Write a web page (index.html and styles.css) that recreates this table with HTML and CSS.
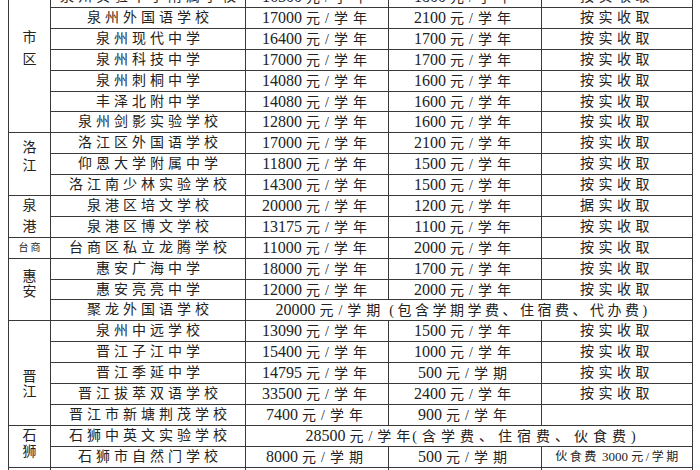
FILE: index.html
```html
<!DOCTYPE html>
<html lang="zh-CN">
<head>
<meta charset="utf-8">
<title>泉州民办学校收费标准</title>
<link rel="stylesheet" href="styles.css">
</head>
<body>
<div class="sheet">
  <div class="c rg r-shiqu">市<br>区</div>
  <div class="c name">泉州第五中学</div><div class="c fee">16000 <span class="u">元/学年</span></div><div class="c fee">1600 <span class="u">元/学年</span></div><div class="c memo">按实收取</div>
  <div class="c name">泉州实验中学附属学校</div><div class="c fee">16500 <span class="u">元/学年</span></div><div class="c fee">1800 <span class="u">元/学年</span></div><div class="c memo">按实收取</div>
  <div class="c name">泉州外国语学校</div><div class="c fee">17000 <span class="u">元/学年</span></div><div class="c fee">2100 <span class="u">元/学年</span></div><div class="c memo">按实收取</div>
  <div class="c name">泉州现代中学</div><div class="c fee">16400 <span class="u">元/学年</span></div><div class="c fee">1700 <span class="u">元/学年</span></div><div class="c memo">按实收取</div>
  <div class="c name">泉州科技中学</div><div class="c fee">17000 <span class="u">元/学年</span></div><div class="c fee">1700 <span class="u">元/学年</span></div><div class="c memo">按实收取</div>
  <div class="c name">泉州刺桐中学</div><div class="c fee">14080 <span class="u">元/学年</span></div><div class="c fee">1600 <span class="u">元/学年</span></div><div class="c memo">按实收取</div>
  <div class="c name">丰泽北附中学</div><div class="c fee">14080 <span class="u">元/学年</span></div><div class="c fee">1600 <span class="u">元/学年</span></div><div class="c memo">按实收取</div>
  <div class="c name">泉州剑影实验学校</div><div class="c fee">12800 <span class="u">元/学年</span></div><div class="c fee">1600 <span class="u">元/学年</span></div><div class="c memo">按实收取</div>

  <div class="c rg r-luojiang">洛<br>江</div>
  <div class="c name">洛江区外国语学校</div><div class="c fee">17000 <span class="u">元/学年</span></div><div class="c fee">2100 <span class="u">元/学年</span></div><div class="c memo">按实收取</div>
  <div class="c name">仰恩大学附属中学</div><div class="c fee">11800 <span class="u">元/学年</span></div><div class="c fee">1500 <span class="u">元/学年</span></div><div class="c memo">按实收取</div>
  <div class="c name">洛江南少林实验学校</div><div class="c fee">14300 <span class="u">元/学年</span></div><div class="c fee">1500 <span class="u">元/学年</span></div><div class="c memo">按实收取</div>

  <div class="c rg r-quangang">泉<br>港</div>
  <div class="c name">泉港区培文学校</div><div class="c fee">20000 <span class="u">元/学年</span></div><div class="c fee">1200 <span class="u">元/学年</span></div><div class="c memo">据实收取</div>
  <div class="c name">泉港区博文学校</div><div class="c fee">13175 <span class="u">元/学年</span></div><div class="c fee">1100 <span class="u">元/学年</span></div><div class="c memo">按实收取</div>

  <div class="c rg r-taishang">台商</div>
  <div class="c name">台商区私立龙腾学校</div><div class="c fee">11000 <span class="u">元/学年</span></div><div class="c fee">2000 <span class="u">元/学年</span></div><div class="c memo">按实收取</div>

  <div class="c rg r-huian">惠<br>安</div>
  <div class="c name">惠安广海中学</div><div class="c fee">18000 <span class="u">元/学年</span></div><div class="c fee">1700 <span class="u">元/学年</span></div><div class="c memo">按实收取</div>
  <div class="c name">惠安亮亮中学</div><div class="c fee">12000 <span class="u">元/学年</span></div><div class="c fee">2000 <span class="u">元/学年</span></div><div class="c memo">按实收取</div>
  <div class="c name">聚龙外国语学校</div><div class="c fee wide w-julong">20000 <span class="u">元/学期</span> <span class="note">(包含学期学费、住宿费、代办费)</span></div>

  <div class="c rg r-jinjiang">晋<br>江</div>
  <div class="c name">泉州中远学校</div><div class="c fee">13090 <span class="u">元/学年</span></div><div class="c fee">1500 <span class="u">元/学年</span></div><div class="c memo">按实收取</div>
  <div class="c name">晋江子江中学</div><div class="c fee">15400 <span class="u">元/学年</span></div><div class="c fee">1000 <span class="u">元/学年</span></div><div class="c memo">按实收取</div>
  <div class="c name">晋江季延中学</div><div class="c fee">14795 <span class="u">元/学年</span></div><div class="c fee">500 <span class="u">元/学期</span></div><div class="c memo">按实收取</div>
  <div class="c name">晋江拔萃双语学校</div><div class="c fee">33500 <span class="u">元/学年</span></div><div class="c fee">2400 <span class="u">元/学年</span></div><div class="c memo">按实收取</div>
  <div class="c name">晋江市新塘荆茂学校</div><div class="c fee">7400 <span class="u">元/学年</span></div><div class="c fee">900 <span class="u">元/学年</span></div><div class="c memo"></div>

  <div class="c rg r-shishi">石<br>狮</div>
  <div class="c name">石狮中英文实验学校</div><div class="c fee wide w-shishi">28500 <span class="u">元/学年</span><span class="note wide-note">(含学费、住宿费、伙食费)</span></div>
  <div class="c name">石狮市自然门学校</div><div class="c fee">8000 <span class="u">元/学期</span></div><div class="c fee">500 <span class="u">元/学期</span></div><div class="c small"><span class="sm">伙食费</span> 3000 <span class="sm">元/学期</span></div>

  <div class="c rg r-nanan">南<br>安</div>
  <div class="c name">南安国光中学</div><div class="c fee">12000 <span class="u">元/学年</span></div><div class="c fee">1500 <span class="u">元/学年</span></div><div class="c memo">按实收取</div>
</div>
</body>
</html>
```

FILE: styles.css
```css
html, body {
  margin: 0;
  padding: 0;
  overflow: hidden;
  background: #ffffff;
}

body {
  width: 700px;
  height: 470px;
  font-family: "Liberation Serif", "Noto Sans CJK SC", serif;
  color: #222222;
}

.sheet {
  display: grid;
  grid-template-columns: 41px 194px 142px 152px 150px;
  grid-auto-rows: 19.9px;
  gap: 1px;
  padding: 1px;
  background: #3a3a3a;
  width: max-content;
  margin: -34.8px 0 0 8px;
}

.c {
  background: #ffffff;
  text-align: center;
  white-space: nowrap;
  overflow: hidden;
  line-height: 20px;
}

.name {
  font-size: 14px;
  letter-spacing: 4px;
  padding-left: 4px;
}

.fee {
  font-size: 16px;
}

.u {
  font-size: 14px;
  letter-spacing: 5px;
}

.memo {
  font-size: 14px;
  letter-spacing: 4.5px;
}

.wide {
  grid-column: span 3;
}

.note {
  font-size: 14px;
  letter-spacing: 3.5px;
}

.w-julong {
  padding-right: 12px;
}

.w-shishi {
  padding-left: 8px;
}

.wide-note {
  letter-spacing: 5px;
  margin-left: -3px;
}

.small {
  font-size: 13px;
  padding-left: 2px;
}

.sm {
  font-size: 12px;
  letter-spacing: 2.5px;
}

/* region labels in the first column */
.rg {
  font-size: 14px;
  display: flex;
  align-items: center;
  justify-content: center;
}

.r-shiqu {
  grid-row: span 8;
  line-height: 22px;
}

.r-luojiang {
  grid-row: span 3;
  line-height: 18px;
  padding-bottom: 15px;
}

.r-quangang {
  grid-row: span 2;
  line-height: 21px;
}

.r-taishang {
  font-size: 10px;
  letter-spacing: 2px;
  padding-left: 2px;
}

.r-huian {
  grid-row: span 3;
  line-height: 15px;
  padding-bottom: 12px;
}

.r-jinjiang {
  grid-row: span 5;
  line-height: 15px;
  padding-top: 22px;
}

.r-shishi {
  grid-row: span 2;
  line-height: 16px;
  padding-bottom: 4px;
}

.r-nanan {
  grid-row: span 4;
  line-height: 20px;
}
```
